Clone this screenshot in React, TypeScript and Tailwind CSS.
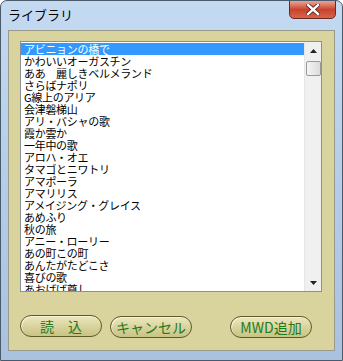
import React from 'react';

const songs = [
  'アビニョンの橋で',
  'かわいいオーガスチン',
  'ああ　麗しきベルメランド',
  'さらばナポリ',
  'G線上のアリア',
  '会津磐梯山',
  'アリ・バシャの歌',
  '霞か雲か',
  '一年中の歌',
  'アロハ・オエ',
  'タマゴとニワトリ',
  'アマポーラ',
  'アマリリス',
  'アメイジング・グレイス',
  'あめふり',
  '秋の旅',
  'アニー・ローリー',
  'あの町この町',
  'あんたがたどこさ',
  '喜びの歌',
  'あおげば尊し',
];

const font = { fontFamily: '"MS UI Gothic", "Noto Sans CJK JP", sans-serif' };

function PillButton({ label }: { label: string }) {
  return (
    <button
      className="h-[22px] w-[82px] rounded-full border border-[#5f5a26] bg-gradient-to-b from-[#ece8c0] via-[#d9d49e] to-[#c9c385] text-[14px] leading-none text-[#1f7a1a] shadow-[inset_1px_1px_0_#f6f3da]"
      style={font}
    >
      {label}
    </button>
  );
}

export default function App() {
  return (
    <div className="w-[343px] h-[361px] overflow-hidden rounded-t-[7px] border border-[#4b5a6b] bg-gradient-to-b from-[#c4daf1] via-[#b5cde8] to-[#a9c2de] flex flex-col">
      {/* Title bar */}
      <div className="h-[29px] flex items-start justify-between pl-[7px] pr-[6px]">
        <span className="mt-[6px] text-[13px] leading-[16px] text-black" style={font}>
          ライブラリ
        </span>
        <button className="mt-[-1px] h-[19px] w-[47px] rounded-b-[5px] border border-[#6b2a20] bg-gradient-to-b from-[#e8a594] via-[#c9422c] to-[#d7644c] flex items-center justify-center">
          <svg width="14" height="11" viewBox="0 0 14 11">
            <path d="M2 1 L12 10 M12 1 L2 10" stroke="#5a1a10" strokeWidth="4" strokeLinecap="square" />
            <path d="M2 1 L12 10 M12 1 L2 10" stroke="#ffffff" strokeWidth="2.4" strokeLinecap="square" />
          </svg>
        </button>
      </div>

      {/* Client area */}
      <div className="mx-[7px] h-[321px] border border-[#9a9a8a] bg-[#d9d49e] flex flex-col">
        {/* List box */}
        <div className="ml-[11px] mt-[10px] w-[302px] h-[251px] border border-[#8a8f98] bg-white flex">
          <div className="flex-1 overflow-hidden pt-[1px]" style={font}>
            {songs.map((s, i) => (
              <div
                key={s}
                className={`h-[12px] pl-[3px] text-[11px] leading-[12px] whitespace-nowrap tracking-[-0.3px] ${
                  i === 0 ? 'bg-[#3399ff] text-white' : 'text-black'
                }`}
              >
                {s}
              </div>
            ))}
          </div>
          {/* Scrollbar */}
          <div className="w-[17px] h-full bg-[#f0f0f0] border-l border-[#e6e6e6] flex flex-col items-center">
            <div className="h-[17px] w-full flex items-center justify-center">
              <svg width="7" height="4" viewBox="0 0 7 4">
                <path d="M0 4 L3.5 0 L7 4 Z" fill="#222" />
              </svg>
            </div>
            <div className="mt-[2px] h-[15px] w-[15px] rounded-[2px] border border-[#9a9a9a] bg-gradient-to-r from-[#f4f4f4] to-[#dcdcdc]" />
            <div className="flex-1" />
            <div className="h-[17px] w-full flex items-center justify-center">
              <svg width="7" height="4" viewBox="0 0 7 4">
                <path d="M0 0 L7 0 L3.5 4 Z" fill="#222" />
              </svg>
            </div>
          </div>
        </div>

        {/* Buttons */}
        <div className="mt-[23px] ml-[11px] flex">
          <PillButton label="読　込" />
          <div className="ml-[8px]">
            <PillButton label="キャンセル" />
          </div>
          <div className="ml-[38px]">
            <PillButton label="MWD追加" />
          </div>
        </div>
      </div>
    </div>
  );
}
